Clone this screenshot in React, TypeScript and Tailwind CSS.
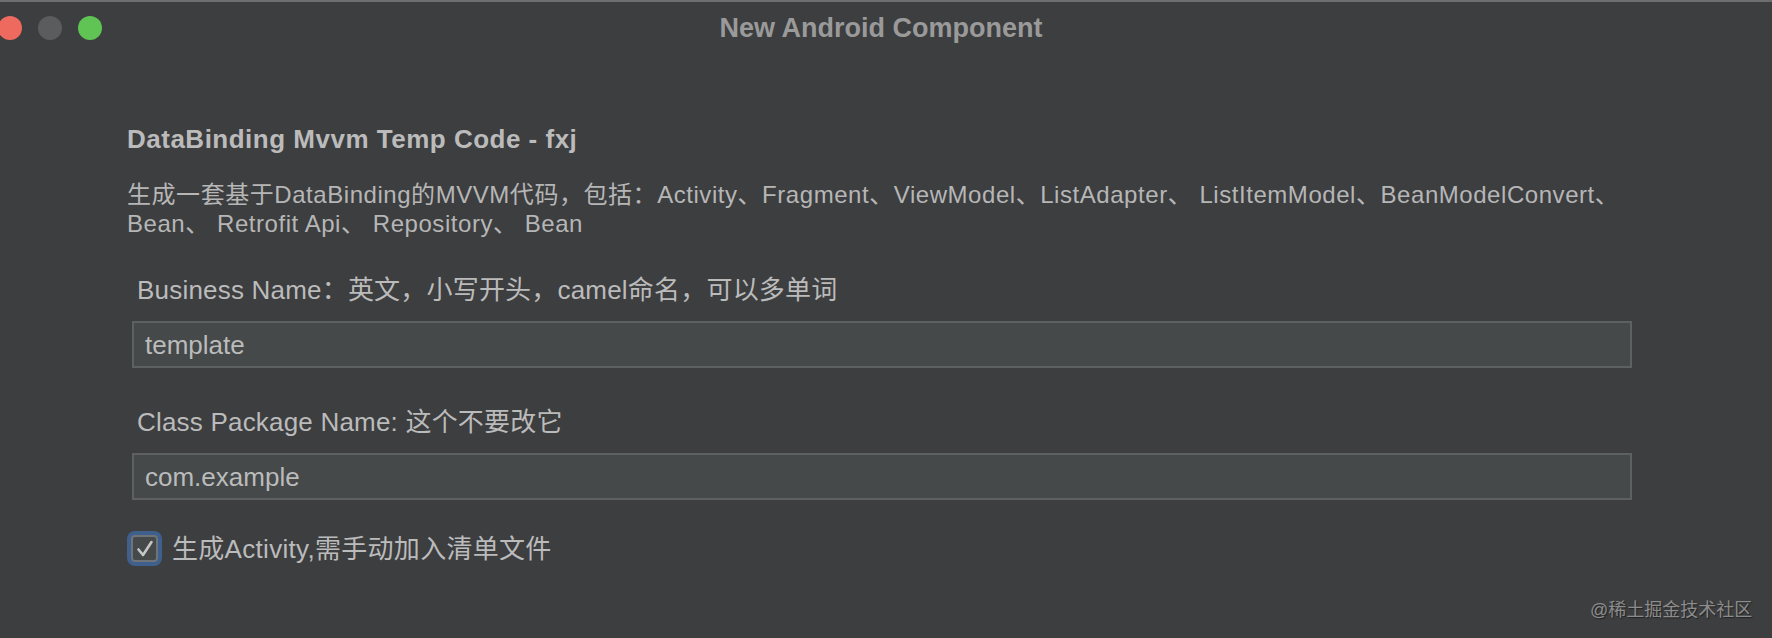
import React from 'react';

const FONT = '"Liberation Sans", "Noto Sans CJK SC", sans-serif';

function TrafficLights() {
  return (
    <div className="ml-[-2px] flex items-center gap-[16px]">
      <div className="h-[24px] w-[24px] rounded-full bg-[#ee6a5f]" />
      <div className="h-[24px] w-[24px] rounded-full bg-[#5b5c5e]" />
      <div className="h-[24px] w-[24px] rounded-full bg-[#5fc454]" />
    </div>
  );
}

function Field({ label, value }: { label: string; value: string }) {
  return (
    <div className="flex flex-col">
      <div className="ml-[10px] text-[26px] leading-[30px] tracking-[0.2px] text-[#bbbbbb]">{label}</div>
      <div className="ml-[5px] mt-[16px] flex h-[47px] w-[1500px] items-center border-2 border-[#5e6162] bg-[#45494a] px-[11px]">
        <span className="text-[26px] leading-[30px] text-[#bbbbbb]">{value}</span>
      </div>
    </div>
  );
}

function Checkbox() {
  return (
    <div className="flex h-[35px] w-[35px] items-center justify-center rounded-[8px] bg-[#3f5f8d] p-[4px]">
      <div className="flex h-full w-full items-center justify-center rounded-[4px] border-2 border-[#6f7478] bg-[#45494a]">
        <svg width="20" height="20" viewBox="0 0 20 20" fill="none">
          <path
            d="M3.5 10.5 L8 16 L16.5 3"
            stroke="#c6c6c6"
            strokeWidth="2.6"
            strokeLinecap="round"
            strokeLinejoin="round"
          />
        </svg>
      </div>
    </div>
  );
}

export default function App() {
  return (
    <div
      className="relative h-[638px] w-[1772px] overflow-hidden border-t-2 border-[#6e6e6e] bg-[#3d3e40]"
      style={{ fontFamily: FONT }}
    >
      {/* title bar */}
      <div className="grid h-[52px] grid-cols-[1fr_auto_1fr] items-center">
        <TrafficLights />
        <div className="mr-[10px] text-[27px] font-bold leading-[30px] text-[#9a9a9a]">New Android Component</div>
        <div />
      </div>

      {/* content */}
      <div className="flex flex-col pl-[127px] pt-[70px]">
        <div className="text-[26px] font-bold leading-[30px] tracking-[0.5px] text-[#bbbbbb]">
          DataBinding Mvvm Temp Code - fxj
        </div>
        <div className="mt-[26px] text-[24px] leading-[29px] tracking-[0.55px] text-[#b6b6b6]">
          生成一套基于DataBinding的MVVM代码，包括：Activity、Fragment、ViewModel、ListAdapter、 ListItemModel、BeanModelConvert、
          <br />
          Bean、 Retrofit Api、 Repository、 Bean
        </div>

        <div className="mt-[37px]">
          <Field label="Business Name：英文，小写开头，camel命名，可以多单词" value="template" />
        </div>
        <div className="mt-[39px]">
          <Field label="Class Package Name: 这个不要改它" value="com.example" />
        </div>

        <div className="mt-[31px] flex items-center gap-[10px]">
          <Checkbox />
          <span className="text-[26px] leading-[30px] tracking-[0.3px] text-[#bbbbbb]">生成Activity,需手动加入清单文件</span>
        </div>
      </div>

      {/* watermark */}
      <div className="absolute left-[1590px] top-[596px] text-[18px] leading-[24px] text-[#8c8c8c] [text-shadow:1px_1px_1px_#222]">
        @稀土掘金技术社区
      </div>
    </div>
  );
}
